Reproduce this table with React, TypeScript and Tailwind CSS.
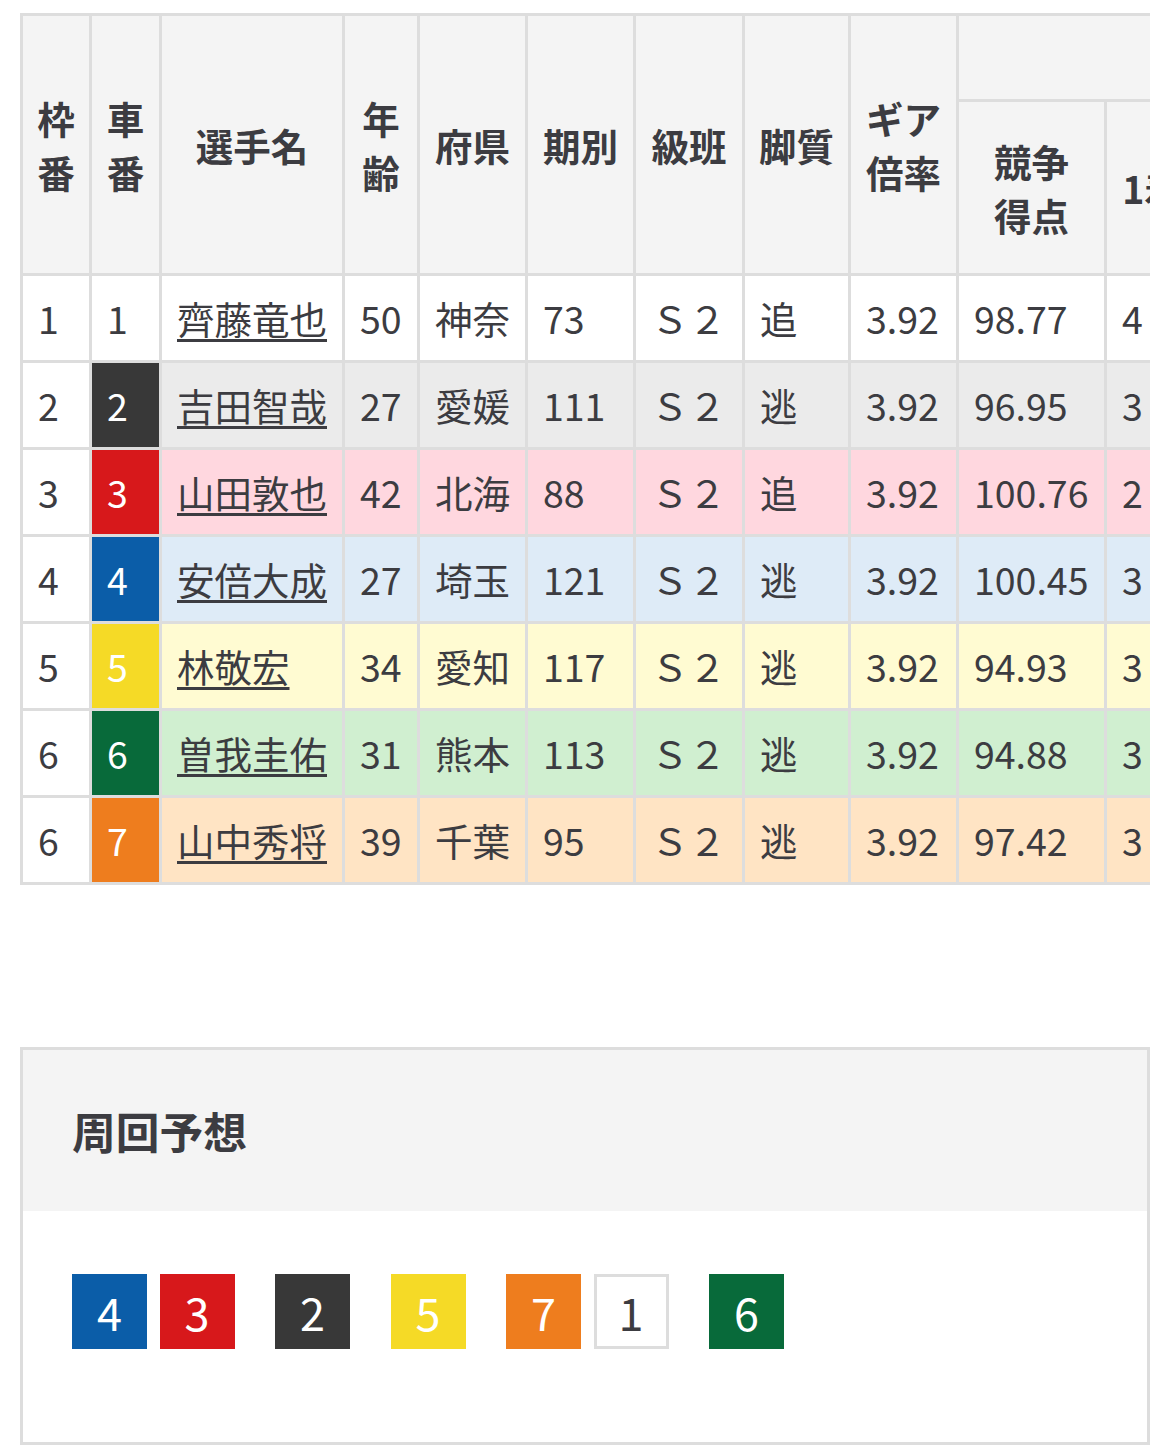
import React from "react";

type Racer = {
  waku: number;
  car: number;
  name: string;
  age: number;
  pref: string;
  term: number;
  cls: string;
  leg: string;
  gear: string;
  score: string;
  results: number[];
  rowBg: string;
  carCls: string;
};

const racers: Racer[] = [
  { waku: 1, car: 1, name: "齊藤竜也", age: 50, pref: "神奈", term: 73, cls: "Ｓ２", leg: "追", gear: "3.92", score: "98.77", results: [4, 3, 2, 9], rowBg: "bg-white", carCls: "bg-white text-[#3c3c41]" },
  { waku: 2, car: 2, name: "吉田智哉", age: 27, pref: "愛媛", term: 111, cls: "Ｓ２", leg: "逃", gear: "3.92", score: "96.95", results: [3, 2, 4, 9], rowBg: "bg-[#ebebeb]", carCls: "bg-[#383838] text-white" },
  { waku: 3, car: 3, name: "山田敦也", age: 42, pref: "北海", term: 88, cls: "Ｓ２", leg: "追", gear: "3.92", score: "100.76", results: [2, 5, 3, 8], rowBg: "bg-[#ffd7df]", carCls: "bg-[#d7181b] text-white" },
  { waku: 4, car: 4, name: "安倍大成", age: 27, pref: "埼玉", term: 121, cls: "Ｓ２", leg: "逃", gear: "3.92", score: "100.45", results: [3, 4, 2, 9], rowBg: "bg-[#deebf7]", carCls: "bg-[#0b5da8] text-white" },
  { waku: 5, car: 5, name: "林敬宏", age: 34, pref: "愛知", term: 117, cls: "Ｓ２", leg: "逃", gear: "3.92", score: "94.93", results: [3, 1, 2, 12], rowBg: "bg-[#fffbd2]", carCls: "bg-[#f5da26] text-white" },
  { waku: 6, car: 6, name: "曽我圭佑", age: 31, pref: "熊本", term: 113, cls: "Ｓ２", leg: "逃", gear: "3.92", score: "94.88", results: [3, 2, 1, 11], rowBg: "bg-[#d0efd0]", carCls: "bg-[#086a3a] text-white" },
  { waku: 6, car: 7, name: "山中秀将", age: 39, pref: "千葉", term: 95, cls: "Ｓ２", leg: "逃", gear: "3.92", score: "97.42", results: [3, 3, 4, 8], rowBg: "bg-[#ffe4c4]", carCls: "bg-[#ee7d1e] text-white" },
];

// 周回予想: groups of car numbers
const lineup: number[][] = [[4, 3], [2], [5], [7, 1], [6]];

const boxColor: Record<number, string> = {
  1: "bg-white text-[#3c3c41] border-[3px] border-[#ddd]",
  2: "bg-[#383838] text-white",
  3: "bg-[#d7181b] text-white",
  4: "bg-[#0b5da8] text-white",
  5: "bg-[#f5da26] text-white",
  6: "bg-[#086a3a] text-white",
  7: "bg-[#ee7d1e] text-white",
};

function Th({ children, className = "" }: { children: React.ReactNode; className?: string }) {
  return (
    <div className={"flex items-center justify-center bg-[#f4f4f4] px-[10px] text-center font-bold leading-[54px] " + className}>
      <span>{children}</span>
    </div>
  );
}

function Td({ children, className = "" }: { children: React.ReactNode; className?: string }) {
  return (
    <div className={"flex items-center whitespace-nowrap px-[15px] " + className}>
      {children}
    </div>
  );
}

export default function App() {
  return (
    <main
      className="min-h-screen bg-white px-[20px] pt-[13px] text-[37.5px] text-[#3c3c41]"
      style={{ fontFamily: '"Noto Sans CJK JP", "Noto Sans", sans-serif' }}
    >
      <div className="overflow-hidden">
        <div className="grid w-max grid-cols-[66px_67px_180px_72px_105px_105px_106px_103px_105px_145px_90px_90px_90px_90px] grid-rows-[83px_171px_repeat(7,84px)] gap-[3px] bg-[#ddd] p-[3px]">
          <Th className="row-span-2">枠番</Th>
          <Th className="row-span-2">車番</Th>
          <Th className="row-span-2">選手名</Th>
          <Th className="row-span-2">年齢</Th>
          <Th className="row-span-2">府県</Th>
          <Th className="row-span-2">期別</Th>
          <Th className="row-span-2">級班</Th>
          <Th className="row-span-2">脚質</Th>
          <Th className="row-span-2">ギア倍率</Th>
          <Th className="col-span-5"> </Th>
          <Th>
            競争
            <br />
            得点
          </Th>
          <Th className="px-0">1着</Th>
          <Th className="px-0">2着</Th>
          <Th className="px-0">3着</Th>
          <Th className="px-0">着外</Th>

          {racers.map((r) => (
            <React.Fragment key={r.car}>
              <Td className="bg-white">{r.waku}</Td>
              <Td className={r.carCls}>{r.car}</Td>
              <Td className={r.rowBg}>
                <a href="#" className="underline decoration-[3px] underline-offset-[5px]">
                  {r.name}
                </a>
              </Td>
              <Td className={r.rowBg}>{r.age}</Td>
              <Td className={r.rowBg}>{r.pref}</Td>
              <Td className={r.rowBg}>{r.term}</Td>
              <Td className={r.rowBg}>{r.cls}</Td>
              <Td className={r.rowBg}>{r.leg}</Td>
              <Td className={r.rowBg}>{r.gear}</Td>
              <Td className={r.rowBg}>{r.score}</Td>
              {r.results.map((n, i) => (
                <Td key={i} className={r.rowBg}>
                  {n}
                </Td>
              ))}
            </React.Fragment>
          ))}
        </div>
      </div>

      <section className="mt-[162px] border-[3px] border-[#ddd]">
        <div className="flex h-[161px] items-center bg-[#f4f4f4] px-[49px]">
          <h2 className="text-[43.75px] font-bold">周回予想</h2>
        </div>
        <div className="flex gap-[40.5px] px-[49px] pt-[63px] pb-[93px]">
          {lineup.map((group, gi) => (
            <div key={gi} className="flex gap-[12.5px]">
              {group.map((n) => (
                <div
                  key={n}
                  className={"flex h-[75px] w-[75px] items-center justify-center text-[45px] leading-none " + boxColor[n]}
                >
                  {n}
                </div>
              ))}
            </div>
          ))}
        </div>
      </section>
    </main>
  );
}
